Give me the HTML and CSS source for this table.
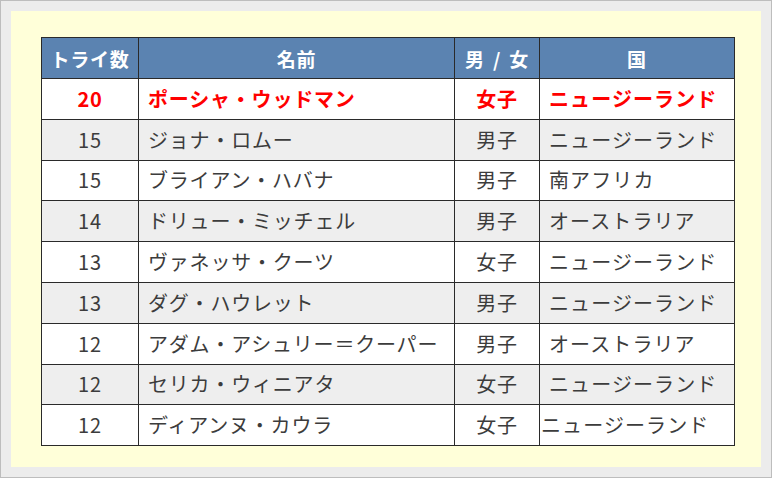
FILE: index.html
```html
<!DOCTYPE html>
<html lang="ja">
<head>
<meta charset="utf-8">
<link rel="stylesheet" href="styles.css">
</head>
<body>
<div class="frame">
  <div class="paper">
    <table class="tries">
      <colgroup>
        <col class="c-num"><col class="c-name"><col class="c-sex"><col class="c-country">
      </colgroup>
      <thead>
        <tr><th>トライ数</th><th>名前</th><th class="sexhead">男 / 女</th><th>国</th></tr>
      </thead>
      <tbody>
        <tr class="top"><td class="num">20</td><td class="name">ポーシャ・ウッドマン</td><td class="sex">女子</td><td class="country">ニュージーランド</td></tr>
        <tr class="alt"><td class="num">15</td><td class="name">ジョナ・ロムー</td><td class="sex">男子</td><td class="country">ニュージーランド</td></tr>
        <tr><td class="num">15</td><td class="name">ブライアン・ハバナ</td><td class="sex">男子</td><td class="country">南アフリカ</td></tr>
        <tr class="alt"><td class="num">14</td><td class="name">ドリュー・ミッチェル</td><td class="sex">男子</td><td class="country">オーストラリア</td></tr>
        <tr><td class="num">13</td><td class="name">ヴァネッサ・クーツ</td><td class="sex">女子</td><td class="country">ニュージーランド</td></tr>
        <tr class="alt"><td class="num">13</td><td class="name">ダグ・ハウレット</td><td class="sex">男子</td><td class="country">ニュージーランド</td></tr>
        <tr><td class="num">12</td><td class="name">アダム・アシュリー＝クーパー</td><td class="sex">男子</td><td class="country">オーストラリア</td></tr>
        <tr class="alt"><td class="num">12</td><td class="name">セリカ・ウィニアタ</td><td class="sex">女子</td><td class="country">ニュージーランド</td></tr>
        <tr><td class="num">12</td><td class="name">ディアンヌ・カウラ</td><td class="sex">女子</td><td class="country flush">ニュージーランド</td></tr>
      </tbody>
    </table>
  </div>
</div>
</body>
</html>
```
FILE: styles.css
```css
html, body {
  margin: 0;
  padding: 0;
}
body {
  width: 772px;
  height: 478px;
  font-family: "Noto Sans CJK JP", "Noto Sans", sans-serif;
}
.frame {
  box-sizing: border-box;
  width: 772px;
  height: 478px;
  border: 1px solid #bdbdbd;
  background: #ececec;
  padding: 10px;
}
.paper {
  box-sizing: border-box;
  height: 100%;
  background: #ffffd9;
  padding: 26px 27px 0 30px;
}
.tries {
  border-collapse: collapse;
  table-layout: fixed;
  width: 693px;
  font-size: 20px;
  letter-spacing: 0.8px;
  color: #3c3c3c;
}
.c-num { width: 97px; }
.c-name { width: 316px; }
.c-sex { width: 85px; }
.c-country { width: 195px; }
.tries th, .tries td {
  border: 1px solid #2a2a2a;
  padding: 0;
  white-space: nowrap;
  line-height: 1;
}
.tries th {
  height: 40px;
  background: #5b83b1;
  color: #ffffff;
  font-weight: 700;
  font-size: 19px;
  text-align: center;
}
.tries th.sexhead {
  word-spacing: 3px;
}
.tries td {
  height: 39.8px;
  background: #ffffff;
}
.tries tr.alt td {
  background: #eeeeee;
}
.num, .sex {
  text-align: center;
}
.name, .country {
  text-align: left;
  padding-left: 9px !important;
}
.country {
  letter-spacing: 1.1px;
}
.country.flush {
  padding-left: 1px !important;
}
.top td {
  color: #ff0000;
  font-weight: 700;
}
```
